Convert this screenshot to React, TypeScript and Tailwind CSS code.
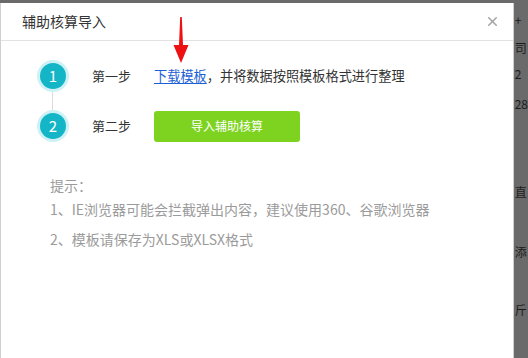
import { X } from "lucide-react";

const sideBits = [
  { top: "mt-[10px]", text: "+" },
  { top: "mt-[14px]", text: "司" },
  { top: "mt-[12px]", text: "2" },
  { top: "mt-[16px]", text: "28" },
  { top: "mt-[74px]", text: "直" },
  { top: "mt-[46px]", text: "添" },
  { top: "mt-[44px]", text: "斤" },
];

function StepDot({ n }: { n: number }) {
  return (
    <div className="flex h-[32px] w-[32px] items-center justify-center rounded-full bg-[#cdf1f5]">
      <div className="flex h-[26px] w-[26px] items-center justify-center rounded-full bg-[#15b5c8] text-[15px] text-white">
        {n}
      </div>
    </div>
  );
}

export default function App() {
  return (
    <div
      className="flex h-[358px] w-[528px] overflow-hidden bg-[#6a6a6a] pt-[3px]"
      style={{ fontFamily: '"Noto Sans CJK SC", "Liberation Sans", sans-serif' }}
    >
      <div className="relative flex h-full w-[517px] flex-col border-x border-[#cfcfcf] bg-white">
        <div className="flex h-[38px] items-center justify-between border-b border-[#e2e2e2] pl-[21px] pr-[13px]">
          <span className="text-[14px] text-[#333]">辅助核算导入</span>
          <X className="h-[15px] w-[15px] text-[#a5a5a5]" strokeWidth={2.5} />
        </div>

        {/* red pointer arrow */}
        <svg
          className="absolute left-[171px] top-[14px]"
          width="18"
          height="46"
          viewBox="0 0 18 46"
        >
          <path d="M8.2 0 L9.8 0 L11 28 L16.5 28 L9 46 L1.5 28 L7 28 Z" fill="#ee1111" />
        </svg>

        <div className="flex flex-col pl-[36px] pt-[19px]">
          <div className="flex items-center">
            <StepDot n={1} />
            <span className="ml-[23px] text-[13px] text-[#333]">第一步</span>
            <span className="ml-[23px] text-[13.2px] text-[#333]">
              <a className="text-[#1a5fd6] underline underline-offset-2">下载模板</a>
              ，并将数据按照模板格式进行整理
            </span>
          </div>
          <div className="ml-[15px] h-[18px] w-px bg-[#dcdcdc]" />
          <div className="flex items-center">
            <StepDot n={2} />
            <span className="ml-[23px] text-[13px] text-[#333]">第二步</span>
            <button className="ml-[23px] h-[31px] w-[146px] rounded-[3px] bg-[#7ed321] text-[12px] text-white">
              导入辅助核算
            </button>
          </div>
        </div>

        <div className="flex flex-col pl-[49px] pt-[33px] text-[14px] leading-[20px] text-[#9b9b9b]">
          <span>提示：</span>
          <span className="mt-[4px]">1、IE浏览器可能会拦截弹出内容，建议使用360、谷歌浏览器</span>
          <span className="mt-[10px]">2、模板请保存为XLS或XLSX格式</span>
        </div>
      </div>

      <div className="flex flex-col pl-[1px] text-[12px] leading-[14px] text-[#1c1c1c]">
        {sideBits.map((b, i) => (
          <span key={i} className={b.top}>
            {b.text}
          </span>
        ))}
      </div>
    </div>
  );
}
